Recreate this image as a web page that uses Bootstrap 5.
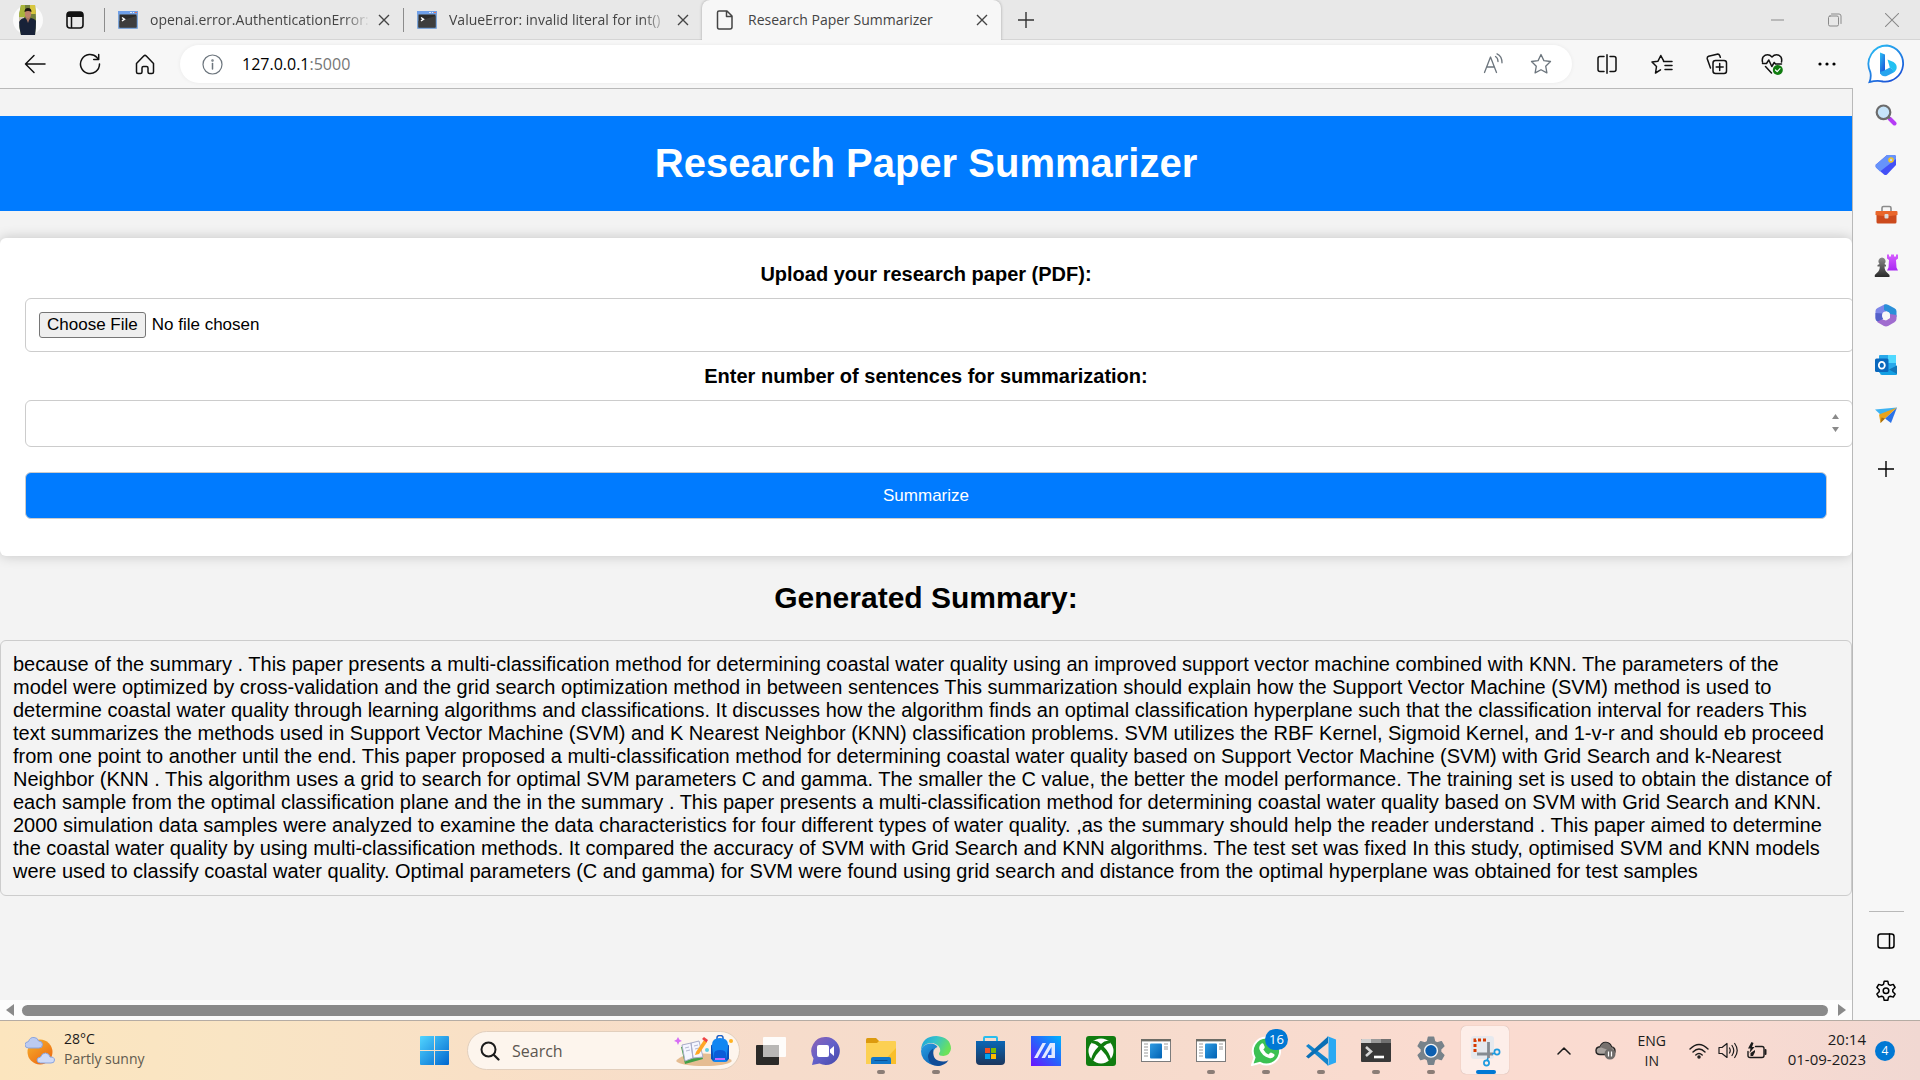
<!DOCTYPE html>
<html lang="en">
<head>
<meta charset="utf-8">
<meta name="viewport" content="width=device-width, initial-scale=1">
<title>Research Paper Summarizer</title>
<link href="https://cdn.jsdelivr.net/npm/bootstrap@5.3.0/dist/css/bootstrap.min.css" rel="stylesheet">
<style>
  body { font-family: "Liberation Sans", Arial, sans-serif; background: #f3f3f3; color: #000; }
  svg { display: block; flex: none; }
  button { color: inherit; }
  .chrome-ui { font-family: "Open Sans", "Noto Sans", sans-serif; }
  .plain-btn { border: 0; background: none; padding: 0; display: flex; align-items: center; justify-content: center; flex: none; }
  .stroke { fill: none; stroke: currentColor; stroke-width: 1.5; stroke-linecap: round; stroke-linejoin: round; }

  /* tab strip */
  .tab-strip { height: 40px; background: #e8e8e8; box-shadow: inset 0 -1px #d5d5d5; color: #333; }
  .strip-start { width: 104px; padding-left: 13px; gap: 23px; }
  .tab-item { width: 299px; height: 40px; padding: 0 9px 0 14px; font-size: 14px; line-height: 20px; color: #444; position: relative; }
  .tab-item .tab-title { flex: 1; margin-left: 12px; white-space: nowrap; }
  .tab-item.idle::before { content: ""; position: absolute; left: 0; top: 8px; width: 1px; height: 24px; background: #8c8c8c; }
  .tab-item.idle .tab-title { -webkit-mask-image: linear-gradient(90deg, #000 88%, transparent); mask-image: linear-gradient(90deg, #000 88%, transparent); }
  .tab-item.current { background: #f7f7f7; border-radius: 8px 8px 0 0; box-shadow: 0 0 3px rgba(0,0,0,.3); clip-path: inset(0 -4px 0 -4px); }
  .tab-close { width: 20px; height: 20px; margin-left: 4px; }
  .win-btn { width: 57px; height: 32px; color: #8a8a8a; }

  /* toolbar */
  .tool-bar { height: 48px; background: #f7f7f7; padding-left: 7px; }
  .tool-btn { width: 55px; height: 48px; color: #111; }
  .address { height: 38px; border-radius: 19px; background: #fff; margin: 0 7px 0 8px; padding: 0 20px 0 22px; box-shadow: 0 0 4px rgba(0,0,0,.06); }
  .address-url { font-size: 16px; line-height: 24px; margin-left: 19px; color: #767676; }
  .address-url b { font-weight: 400; color: #000; }
  .bing-btn { width: 66px; height: 48px; }

  /* page */
  .viewport-pane { border-top: 1px solid #b9b9b9; border-right: 1px solid #b9b9b9; min-width: 0; overflow: hidden; }
  .page-area { overflow: hidden; }
  .page-banner { font-size: 40px; line-height: 45px; font-weight: 700; background: #007bff; color: #fff; padding: 25px; margin: 27px 0; }
  .upload-card { background: #fff; border-radius: 6px; box-shadow: 0 0 13px rgba(0,0,0,.2); padding: 25px; }
  .upload-card label { font-size: 20px; line-height: 23px; font-weight: 700; margin-bottom: 12px; display: block; }
  .paper-field { display: block; box-sizing: content-box; width: 100%; border: 1px solid #ccc; border-radius: 6px; background: #fff; font-size: 17px; line-height: 21px; padding: 12px; margin-bottom: 13px; color: #000; }
  .paper-field[type=file] { height: 26px; padding: 13px 12px 13px 13px; line-height: 22px; }
  .paper-field::file-selector-button { border: 1px solid #767676; border-radius: 3px; background: #efefef; color: #000; padding: 1px 7px; height: 26px; margin: 0 6px 0 0; }
  .paper-field[type=number] { appearance: textfield; -moz-appearance: textfield; }
  .paper-field[type=number]::-webkit-inner-spin-button { display: none; }
  .spin-arrows { position: absolute; right: -12px; top: 13px; }
  .send-btn { border: 1px solid #ccc; border-radius: 6px; background: #007bff; color: #fff; font-size: 17px; line-height: 21px; padding: 12px; margin: 25px 0 12px; }
  .summary-title { font-size: 30px; line-height: 34px; font-weight: 700; margin: 25px 0; }
  .summary-box { border: 1px solid #ccc; border-radius: 6px; padding: 12px 16px 12px 12px; font-size: 20px; line-height: 23px; }
  .h-scroll { height: 20px; background: #fcfcfc; padding: 0 6px; gap: 8px; }
  .h-thumb { height: 11px; border-radius: 6px; background: #8a8a8a; }

  /* side bar */
  .side-bar { width: 67px; background: #f7f7f7; padding: 2px 1px 0 0; }
  .side-btn { width: 50px; height: 50px; }
  .side-line { width: 35px; height: 1px; background: #b9b9b9; }

  /* task bar */
  .task-bar { height: 60px; border-top: 1px solid #b5aca4; background: linear-gradient(90deg, #fce5be 0%, #f9e5c4 12%, #f9e0c6 25%, #f6dccb 40%, #f6dbcc 58%, #fadbd0 75%, #fadbd1 88%, #f1d8d2 100%); color: #1b1b1b; }
  .weather { width: 407px; padding-left: 25px; gap: 9px; font-size: 14px; line-height: 20px; }
  .weather small { font-size: 14px; color: #615a4e; display: block; }
  .task-btn { width: 55px; height: 59px; position: relative; }
  .task-btn.running::after { content: ""; position: absolute; left: 24px; bottom: 6px; width: 8px; height: 4px; border-radius: 2px; background: #8b7d76; }
  .task-btn.focused::before { content: ""; position: absolute; left: 3px; top: 5px; width: 48px; height: 48px; border-radius: 5px; background: #fdeee9; box-shadow: 0 0 1px rgba(0,0,0,.3); }
  .task-btn.focused::after { left: 18px; width: 20px; background: #0078d4; }
  .task-btn svg { position: relative; }
  .task-search { width: 273px; height: 39px; margin: 0 3px 0 5px; border-radius: 20px; background: #fdf5ed; border: 1px solid #e2cfbd; padding: 0 5px 0 12px; }
  .task-search input { font-size: 16px; line-height: 24px; border: 0; background: none; outline: 0; min-width: 0; padding: 0; margin-left: 12px; }
  .task-search input::placeholder { color: #5c5650; opacity: 1; }
  .count-dot { position: absolute; left: 27px; top: 8px; width: 23px; height: 21px; border-radius: 11px; background: #0078d4; color: #fff; font-size: 13px; line-height: 20px; text-align: center; }
  .tray { padding-right: 25px; font-size: 15px; line-height: 20px; }
  .tray-lang { width: 40px; margin: 0 17px 0 16px; font-size: 14px; }
  .note-dot { width: 20px; height: 20px; border-radius: 10px; background: #0078d4; color: #fff; font-size: 12px; line-height: 20px; margin-left: 9px; }
</style>
</head>
<body class="vh-100 d-flex flex-column overflow-hidden">

<svg width="0" height="0" class="position-absolute" aria-hidden="true">
  <symbol id="i-console" viewBox="0 0 20 18"><rect width="20" height="18" rx="1" fill="#7fa7da"/><rect width="20" height="3" fill="#6f9fe8"/><path d="M12 1.500h2M15 1.500h1" stroke="#dce8f8"/><path d="M17 1.500h2" stroke="#e0705c"/><rect x="1.500" y="3.500" width="17" height="13" fill="#2b2b2b"/><path d="M1.500 16.500V10L18.500 5v11.500z" fill="#3d3d3d"/><path d="M4 6.500l2.500 1.700L4 10" stroke="#fff" stroke-width="1.500" fill="none"/></symbol>
  <symbol id="i-x" viewBox="0 0 12 12"><path d="M1 1l10 10M11 1L1 11" stroke="currentColor" stroke-width="1.400" fill="none"/></symbol>
  <symbol id="i-plus" viewBox="0 0 18 18"><path d="M9 1v16M1 9h16" stroke="currentColor" stroke-width="1.400" fill="none"/></symbol>
  <symbol id="i-gear" viewBox="0 0 24 24"><path d="M10.200 2.200h3.600l.7 3.100 1.800 1 3-.9 1.800 3.100-2.300 2.200v2.100l2.300 2.200-1.800 3.100-3-.9-1.800 1-.7 3.100h-3.600l-.7-3.100-1.800-1-3 .9L2.900 15l2.300-2.200v-2.100L2.900 8.500l1.800-3.100 3 .9 1.800-1z"/></symbol>
  <symbol id="i-window" viewBox="0 0 30 23"><rect x=".5" y=".5" width="29" height="22" fill="#fff" stroke="#7c7c7c"/><path d="M0 1.200h30" stroke="#6c6c66" stroke-width="2.400"/><rect x="9" y="4.500" width="12" height="15" rx="1" fill="url(#g-blue)"/><path d="M3 5h4M3 8h4M3 11h4M3 14h4M3 17h4M23 5h4M23 8h4M23 10h4" stroke="#9a9a9a"/></symbol>
  <defs>
    <linearGradient id="g-blue" x1="0" y1="0" x2="1" y2="1"><stop stop-color="#2f9be2"/><stop offset="1" stop-color="#0062b4"/></linearGradient>
    <linearGradient id="g-win" x1="0" y1="0" x2="1" y2="1"><stop stop-color="#52d5ff"/><stop offset="1" stop-color="#0067cf"/></linearGradient>
    <linearGradient id="g-bing" x1="0" y1="0" x2=".6" y2="1"><stop stop-color="#2bc3f5"/><stop offset="1" stop-color="#1b55d8"/></linearGradient>
    <linearGradient id="g-purple" x1="0" y1="0" x2="0" y2="1"><stop stop-color="#d65cff"/><stop offset="1" stop-color="#a829f2"/></linearGradient>
    <linearGradient id="g-dark" x1="0" y1="0" x2="0" y2="1"><stop stop-color="#8a8a8a"/><stop offset="1" stop-color="#2b2b2b"/></linearGradient>
  </defs>
</svg>

<header class="chrome-ui flex-shrink-0">
  <div class="tab-strip d-flex">
    <div class="strip-start d-flex align-items-center">
      <button class="plain-btn" aria-label="Profile"><svg width="30" height="30" viewBox="0 0 30 30"><clipPath id="av"><path d="M8 0h14q2 15 0 30H8Q4 15 8 0z"/></clipPath><circle cx="15" cy="15" r="15" fill="#fafafa"/><g clip-path="url(#av)"><rect width="30" height="30" fill="#73823c"/><path d="M5 0h7v12H5z" fill="#a8b53a"/><path d="M17 0h7v9h-7z" fill="#d7c63f"/><path d="M6 12h5v8H6z" fill="#cfc6b8"/><path d="M6 30V17q2-4 6-4l3 2 3-2q5 1 6 5v12z" fill="#182238"/><ellipse cx="15" cy="8.500" rx="3.200" ry="4.800" fill="#bd826b"/><path d="M11.500 7q0-4 3.500-4t3.500 4q-3.500-2-7 0z" fill="#1a1512"/><path d="M13 13l2 5 2-5" fill="#a97560"/></g></svg></button>
      <button class="plain-btn" aria-label="Workspaces"><svg width="18" height="18" viewBox="0 0 18 18"><rect x="1" y="1" width="16" height="16" rx="3" fill="none" stroke="#111" stroke-width="1.600"/><path d="M1 6V3.500Q1 1 3.500 1h11Q17 1 17 3.500V6z" fill="#111"/><path d="M5.500 5v12" stroke="#111" stroke-width="1.500"/></svg></button>
    </div>
    <div class="tab-item idle d-flex align-items-center"><svg width="20" height="18"><use href="#i-console"/></svg><span class="tab-title">openai.error.AuthenticationError:</span><button class="plain-btn tab-close" aria-label="Close tab"><svg width="12" height="12"><use href="#i-x"/></svg></button></div>
    <div class="tab-item idle d-flex align-items-center"><svg width="20" height="18"><use href="#i-console"/></svg><span class="tab-title">ValueError: invalid literal for int()</span><button class="plain-btn tab-close" aria-label="Close tab"><svg width="12" height="12"><use href="#i-x"/></svg></button></div>
    <div class="tab-item current d-flex align-items-center"><svg width="20" height="20" viewBox="0 0 20 20" class="stroke"><path d="M3 1h8l5 5v11q0 2-2 2H3q-1.500 0-1.500-2V2.500Q1.500 1 3 1zM10.500 1v5.500H16"/></svg><span class="tab-title">Research Paper Summarizer</span><button class="plain-btn tab-close" aria-label="Close tab"><svg width="12" height="12"><use href="#i-x"/></svg></button></div>
    <button class="plain-btn px-3" aria-label="New tab"><svg width="18" height="18"><use href="#i-plus"/></svg></button>
    <div class="ms-auto d-flex pt-1">
      <button class="plain-btn win-btn" aria-label="Minimize"><svg width="13" height="2"><path d="M0 1h13" stroke="currentColor"/></svg></button>
      <button class="plain-btn win-btn" aria-label="Restore"><svg width="14" height="14" class="stroke" viewBox="0 0 14 14"><rect x=".5" y="3" width="10" height="10" rx="1.500" stroke-width="1"/><path d="M3.500 1h7.500q2 0 2 2v7.500" stroke-width="1"/></svg></button>
      <button class="plain-btn win-btn" aria-label="Close"><svg width="14" height="14" viewBox="0 0 12 12"><path d="M0 0l12 12M12 0L0 12" stroke="currentColor" stroke-width=".9"/></svg></button>
    </div>
  </div>
  <div class="tool-bar d-flex align-items-center">
    <button class="plain-btn tool-btn" aria-label="Back"><svg width="22" height="20" viewBox="0 0 22 20" class="stroke"><path d="M21 10H1.500M10 1.500L1.500 10l8.500 8.500"/></svg></button>
    <button class="plain-btn tool-btn" aria-label="Refresh"><svg width="22" height="22" viewBox="0 0 22 22" class="stroke"><path d="M20.500 11A9.500 9.500 0 1 1 18 4.600l1.500 1.900M19.700 1.500v5h-5"/></svg></button>
    <button class="plain-btn tool-btn" aria-label="Home"><svg width="20" height="21" viewBox="0 0 20 21" class="stroke"><path d="M1.500 9.500L8.700 2q1.300-1.200 2.600 0l7.200 7.500V18q0 1.500-1.500 1.500h-2.500q-1.500 0-1.500-1.500v-4q0-1.500-1.500-1.500h-3Q7 12.500 7 14v4q0 1.500-1.500 1.500H3q-1.500 0-1.500-1.500z"/></svg></button>
    <div class="address d-flex align-items-center flex-fill">
      <svg width="21" height="21" viewBox="0 0 21 21" class="stroke text-secondary"><circle cx="10.500" cy="10.500" r="9.500" stroke-width="1.200"/><path d="M10.500 9.500v5.500" /><circle cx="10.500" cy="6.400" r=".5"/></svg>
      <a class="address-url text-decoration-none" href="#"><b>127.0.0.1</b>:5000</a>
      <button class="plain-btn ms-auto me-4 text-secondary" aria-label="Read aloud"><svg width="24" height="22" viewBox="0 0 22 22" class="stroke"><path d="M1.500 19.500L7.500 4l6 15.500M3.800 14h7.500M12.500 3.500q2.500 1.500 2.500 5M14 .8q5 2.200 5 9" stroke-width="1.300"/></svg></button>
      <button class="plain-btn text-secondary" aria-label="Add to favorites"><svg width="22" height="22" viewBox="0 0 22 22" class="stroke"><path d="M11 1.500l2.900 6.100 6.600.9-4.800 4.700 1.200 6.700-5.900-3.200-5.900 3.200 1.200-6.700L1.500 8.500l6.600-.9z" stroke-width="1.300"/></svg></button>
    </div>
    <button class="plain-btn tool-btn" aria-label="Split screen"><svg width="20" height="20" viewBox="0 0 20 20" class="stroke"><path d="M7 2.500H3Q1 2.500 1 4.500v11q0 2 2 2h4M13 2.500h4q2 0 2 2v11q0 2-2 2h-4M10 .8v18.400"/></svg></button>
    <button class="plain-btn tool-btn" aria-label="Favorites"><svg width="22" height="20" viewBox="0 0 22 20" class="stroke"><path d="M12.500 7.500h8.500M14 11.500h7M14 15.500h7M9.500 15.800L4.500 19l1-6.500L1 8l6-.8L9.800 1.500l2.700 5.200"/></svg></button>
    <button class="plain-btn tool-btn" aria-label="Collections"><svg width="22" height="22" viewBox="0 0 22 22" class="stroke"><rect x="7" y="7.500" width="13.500" height="13" rx="2.500"/><path d="M13.700 10.500v7M10.200 14h7M4.500 15L1.300 6q-.5-2 1.300-2.700L11 1.200q2-.4 2.700 1.300l.6 1.800"/></svg></button>
    <button class="plain-btn tool-btn" aria-label="Browser essentials"><svg width="22" height="22" viewBox="0 0 22 22" class="stroke"><path d="M1.500 9Q.5 4 4 2.300q4-1.500 7 1.700 3-3.200 7-1.700Q21.500 4 20.500 9M1.500 10.500h4l2.300-3.500 3 6.500 2.400-4 1.300 1.500h6M4.500 13.500l6 6.500"/><circle cx="16.800" cy="17" r="5" fill="#107c10" stroke="none"/><path d="M14.500 17l1.700 1.600 2.800-3" stroke="#fff" stroke-width="1.200"/></svg></button>
    <button class="plain-btn tool-btn" aria-label="More"><svg width="18" height="4" viewBox="0 0 18 4"><circle cx="2" cy="2" r="1.600"/><circle cx="9" cy="2" r="1.600"/><circle cx="16" cy="2" r="1.600"/></svg></button>
    <button class="plain-btn bing-btn" aria-label="Bing chat"><svg width="40" height="40" viewBox="0 0 40 40"><path d="M20 1.500a18 18 0 1 1-4 36q-6-1.300-13.500.5 2-5 .8-10A18.500 18.500 0 0 1 20 1.500z" fill="#fff" stroke="url(#g-bing)" stroke-width="1.800"/><path d="M13 8.500l5 2v16.500l-5 3z" fill="url(#g-bing)"/><path d="M13 28q1 5 6 4.200 3-.8 9-4.700l-5-4-7 3.500z" fill="#27a5ee"/><path d="M20.500 15.500l6 2.500q4 2.500 3 7-1 3-3.500 3.500 0-3.500-3.200-5z" fill="#22c1f2"/></svg></button>
  </div>
</header>

<div class="d-flex flex-fill" style="min-height:0">
  <main class="viewport-pane flex-fill d-flex flex-column">
    <div class="page-area flex-fill">
      <h1 class="page-banner text-center">Research Paper Summarizer</h1>
      <form class="upload-card text-center" onsubmit="return false">
        <label for="paper">Upload your research paper (PDF):</label>
        <input class="paper-field" type="file" id="paper">
        <label for="sentences">Enter number of sentences for summarization:</label>
        <div class="position-relative">
          <input class="paper-field" type="number" id="sentences">
          <svg class="spin-arrows" width="7" height="21" viewBox="0 0 7 21" fill="#8a8a8a" aria-hidden="true"><path d="M0 6l3.500-5L7 6zM0 14h7l-3.500 5z"/></svg>
        </div>
        <button class="send-btn d-block w-100" type="submit">Summarize</button>
      </form>
      <h2 class="summary-title text-center">Generated Summary:</h2>
      <div class="summary-box">because of the summary . This paper presents a multi-classification method for determining coastal water quality using an improved support vector machine combined with KNN. The parameters of the model were optimized by cross-validation and the grid search optimization method in between sentences This summarization should explain how the Support Vector Machine (SVM) method is used to determine coastal water quality through learning algorithms and classifications. It discusses how the algorithm finds an optimal classification hyperplane such that the classification interval for readers This text summarizes the methods used in Support Vector Machine (SVM) and K Nearest Neighbor (KNN) classification problems. SVM utilizes the RBF Kernel, Sigmoid Kernel, and 1-v-r and should eb proceed from one point to another until the end. This paper proposed a multi-classification method for determining coastal water quality based on Support Vector Machine (SVM) with Grid Search and k-Nearest Neighbor (KNN . This algorithm uses a grid to search for optimal SVM parameters C and gamma. The smaller the C value, the better the model performance. The training set is used to obtain the distance of each sample from the optimal classification plane and the in the summary . This paper presents a multi-classification method for determining coastal water quality based on SVM with Grid Search and KNN. 2000 simulation data samples were analyzed to examine the data characteristics for four different types of water quality. ,as the summary should help the reader understand . This paper aimed to determine the coastal water quality by using multi-classification methods. It compared the accuracy of SVM with Grid Search and KNN algorithms. The test set was fixed In this study, optimised SVM and KNN models were used to classify coastal water quality. Optimal parameters (C and gamma) for SVM were found using grid search and distance from the optimal hyperplane was obtained for test samples</div>
    </div>
    <div class="h-scroll d-flex align-items-center flex-shrink-0">
      <svg width="8" height="12" fill="#8a8a8a"><path d="M8 0v12L0 6z"/></svg>
      <div class="h-thumb flex-fill"></div>
      <svg width="10" height="12" fill="#8a8a8a"><path d="M2 0v12l8-6z"/></svg>
    </div>
  </main>

  <nav class="side-bar d-flex flex-column align-items-center flex-shrink-0" aria-label="Side bar">
    <button class="plain-btn side-btn" aria-label="Search"><svg width="22" height="22" viewBox="0 0 22 22"><path d="M14.500 14.500l5 5" stroke="#b53cf5" stroke-width="4" stroke-linecap="round"/><path d="M13 12.500l2 2" stroke="#777" stroke-width="2"/><circle cx="8.500" cy="8.300" r="6.800" fill="#c6e4fa" stroke="#6c6c6c" stroke-width="2.200"/></svg></button>
    <button class="plain-btn side-btn" aria-label="Shopping"><svg width="22" height="22" viewBox="0 0 22 22"><path d="M12 1h7q2 0 2 2v8l-9 9.500q-1.500 1-3 0L1 13.500q-1-1.500 0-3z" fill="#4350f6"/><path d="M12 1h7q2 0 2 2v2L5 17.500l-4-4q-1-1.500 0-3z" fill="#6793fa"/><circle cx="16" cy="6" r="2" fill="#bcd0ff" stroke="#f3c623" stroke-width="1.600"/></svg></button>
    <button class="plain-btn side-btn" aria-label="Tools"><svg width="23" height="20" viewBox="0 0 23 20"><path d="M7 6V3q0-1.500 1.500-1.500h6Q16 1.500 16 3v3" fill="none" stroke="#8b8b8b" stroke-width="1.600"/><rect x="1.500" y="9" width="20" height="9.500" rx="1.500" fill="#cc4a1d"/><path d="M1.500 6h20q1 0 1 1v3l-11 1.500L.5 10V7q0-1 1-1z" fill="#e9662b"/><rect x="9.500" y="9" width="4" height="4.500" rx="1" fill="#dcdcdc"/></svg></button>
    <button class="plain-btn side-btn" aria-label="Games"><svg width="24" height="23" viewBox="0 0 24 23"><path d="M13 .5h2v2h2v-2h3v2h2v-2h2v4l-2 1.500.5 7.500 1.500 3H13l1.500-3 .5-7.500-2-1.500z" fill="url(#g-purple)"/><path d="M8 3.500a3.800 3.800 0 0 1 2.500 6.500l1.500 1v1.500h-1.500q0 4 3 6.500l2 2v2H.8v-2l2-2q3-2.500 3-6.500H3.500V11L5.500 10A3.800 3.800 0 0 1 8 3.500z" fill="url(#g-dark)"/></svg></button>
    <button class="plain-btn side-btn" aria-label="Microsoft 365"><svg width="22" height="23" viewBox="0 0 22 23"><path d="M11.500 7.500L7.500 10v6L1.500 17Q.5 16 .5 14V7Q.5 5 2.500 4L9 .7q1-.5 2.500-.2z" fill="#7e86e8"/><path d="M9 .7q2-.7 4 0l6.500 3.500q2 1 2 3v6l-7-2.700V9L9 6z" fill="#2a8fd8"/><path d="M21.500 11v4q0 2-2 3.200L13 22q-2 .8-4 0l-6.500-3.800L2 14.500l5.500 1 3.500 1 4-2.500v-4z" fill="#a06ccf"/><path d="M.5 9v5q0 2 2 3.500L8 15v-5.500z" fill="#5560c9"/><circle cx="11" cy="11.500" r="4" fill="#f7f7f7"/></svg></button>
    <button class="plain-btn side-btn" aria-label="Outlook"><svg width="22" height="22" viewBox="0 0 22 22"><rect x="4" y="1" width="17" height="18" rx="1" fill="#28a8ea"/><path d="M13 1h8v8h-8z" fill="#50d9ff"/><path d="M7 21q-2 0-2-2v-6l10 3 7-4.500V20q0 1-1 1z" fill="#14a0e4"/><path d="M14 15.500l8-4V20z" fill="#1276ba"/><rect x="0" y="4.500" width="13.500" height="13.500" rx="1.500" fill="#0a68bd"/><ellipse cx="6.800" cy="11.200" rx="3" ry="3.400" fill="none" stroke="#fff" stroke-width="1.800"/></svg></button>
    <button class="plain-btn side-btn" aria-label="Drop"><svg width="22" height="16" viewBox="0 0 22 16"><path d="M0 2.500L22 .5 8 10z" fill="#3eb3f2"/><path d="M22 .5L16 16l-6-4.500z" fill="#2b72e8"/><path d="M22 .5L10 11.500 5.500 16 4 7.500z" fill="#e9a31c"/><path d="M5.500 16l1-5.500 3.500 1z" fill="#a66f13"/></svg></button>
    <button class="plain-btn side-btn mt-1" aria-label="Customize"><svg width="18" height="18"><use href="#i-plus"/></svg></button>
    <div class="mt-auto mb-1 side-line"></div>
    <button class="plain-btn side-btn" aria-label="Hide side bar"><svg width="18" height="16" viewBox="0 0 18 16" class="stroke"><rect x="1" y="1" width="16" height="14" rx="2.500"/><path d="M12.500 1v14"/></svg></button>
    <button class="plain-btn side-btn mb-1" aria-label="Settings"><svg width="24" height="24" viewBox="0 0 24 24" class="stroke"><use href="#i-gear"/><circle cx="12" cy="11.800" r="2.800"/></svg></button>
  </nav>
</div>

<footer class="task-bar chrome-ui d-flex align-items-center flex-shrink-0">
  <div class="weather d-flex align-items-center">
    <svg width="30" height="30" viewBox="0 0 30 30"><defs><linearGradient id="sun" x1="0" y1="0" x2=".7" y2="1"><stop stop-color="#f5b52e"/><stop offset="1" stop-color="#ee6a12"/></linearGradient></defs><circle cx="15" cy="16" r="12.500" fill="url(#sun)"/><path d="M3.500 12Q0 12 0 8.700 0 6 3.500 5.500 5 1 9 1.500q3.500 0 4.500 3.500 4 0 4 3.500T14 12z" fill="#bccbf1" stroke="#8ba4dd"/><path d="M15.500 27q-3.500 0-3.500-3 0-2.500 3.500-3 1.500-4 5-4 4 .5 4.500 4 4.500-.2 4.500 3t-3.500 3z" fill="#cfdaf7" stroke="#8ba4dd"/></svg>
    <div class="pb-1">28°C<small>Partly sunny</small></div>
  </div>
  <button class="plain-btn task-btn" aria-label="Start"><svg width="29" height="29" viewBox="0 0 29 29" fill="url(#g-win)"><path d="M1 0h13v14H0V1q0-1 1-1zM15 0h13q1 0 1 1v13H15zM0 15h14v14H1q-1 0-1-1zM15 15h14v13q0 1-1 1H15z"/></svg></button>
  <div class="task-search d-flex align-items-center">
    <svg width="20" height="20" viewBox="0 0 20 20" class="stroke"><circle cx="8.500" cy="8.500" r="7" stroke-width="2"/><path d="M14 14l4.500 4.500" stroke-width="2.200"/></svg>
    <input type="search" placeholder="Search" aria-label="Search" class="flex-fill">
    <svg width="60" height="32" viewBox="0 0 60 32"><path d="M2 26q6-8 28-7.500T58 26q-5 5-28 5T2 26z" fill="#e5bd92"/><path d="M7 12l10-3 8 1 4 14-18 5z" fill="#43a047"/><path d="M8 10l9-2 2 15-8 3zM17 8l8-2 4 16-10 1z" fill="#f5f6ff" stroke="#a9acc8"/><path d="M11 13l4-1M12 16l4-1M20 11l4-1M21 14l4-1" stroke="#b5b8d2"/><path d="M22 17l8-12 3 2-8 12-4 1z" fill="#ffa726"/><path d="M28 4l2-2 4 3-1.500 2.500z" fill="#ef4444"/><path d="M4 2l1.300 2.500L8 6 5.300 7 4 10 2.700 7 0 6l2.700-1.500z" fill="#d76df5"/><circle cx="33" cy="15" r="2" fill="#5fd0e6"/><circle cx="57" cy="6" r="2" fill="#ffb320"/><path d="M43 4V2.500Q43 .5 46 .5t3 2V4" stroke="#1f5fc4" fill="none" stroke-width="1.500"/><path d="M38 10q0-7 8-7t8 7v14q0 3-3 3H41q-3 0-3-3z" fill="#1286f2"/><path d="M38 12q0-3-1-2v14l3 2zM54 12q0-3 1-2v14l-3 2z" fill="#0850bd"/><path d="M40 19q0-4 6-4t6 4v6H40z" fill="#0a5cd8"/><path d="M41 24h10" stroke="#c36bff" stroke-width="2"/></svg>
  </div>
  <button class="plain-btn task-btn" aria-label="Task view"><svg width="30" height="28" viewBox="0 0 30 28"><rect x="0" y="8" width="23" height="20" rx="1" fill="#2b2a28"/><rect x="7" y="0" width="23" height="20" rx="1" fill="#fff" fill-opacity=".9"/><rect x="7" y="8" width="16" height="12" fill="#b9b7b5"/></svg></button>
  <button class="plain-btn task-btn" aria-label="Chat"><svg width="29" height="28" viewBox="0 0 29 28"><defs><linearGradient id="chat" x1="0" y1="0" x2="1" y2="1"><stop stop-color="#8f63b5"/><stop offset=".5" stop-color="#6260c9"/><stop offset="1" stop-color="#4448a8"/></linearGradient></defs><path d="M14.500 0a14 14 0 1 1-6 26.500L1 28l1.500-6.500A14 14 0 0 1 14.500 0z" fill="url(#chat)"/><rect x="6" y="8" width="12" height="12" rx="2" fill="#fff"/><path d="M19 12.500l4-3.500v10l-4-3.500z" fill="#fff"/></svg></button>
  <button class="plain-btn task-btn running" aria-label="File Explorer"><svg width="30" height="26" viewBox="0 0 30 26"><path d="M0 8V1.500Q0 0 1.500 0H10l3 3v5z" fill="#dc9a0e"/><path d="M0 5h11l2-2h16q1 0 1 1v22H0z" fill="#fcd052"/><path d="M30 10v16H15z" fill="#f9bf2b"/><path d="M5 26v-5q0-2 2-2h16q2 0 2 2v5z" fill="#1177c9"/><path d="M8.500 22.500h13" stroke="#0b4f91"/></svg></button>
  <button class="plain-btn task-btn running" aria-label="Microsoft Edge"><svg width="30" height="30" viewBox="0 0 30 30"><defs><linearGradient id="ed1" x1="0" y1="0" x2="1" y2=".4"><stop stop-color="#1a9fdc"/><stop offset=".5" stop-color="#36c3c9"/><stop offset="1" stop-color="#6ce25a"/></linearGradient><linearGradient id="ed2" x1="0" y1="0" x2=".7" y2="1"><stop stop-color="#2a9fe3"/><stop offset="1" stop-color="#0b62b4"/></linearGradient></defs><path d="M0 14Q1 0 15.500 0 29.500 1 30 12.500q-.5 6.500-7.500 7.500-5 0-4.500-2.500 2-2 1-5Q16.500 7 9.500 7 2 8 0 14z" fill="url(#ed1)"/><path d="M0 15Q1 8 9.500 7.500q5 .3 7 3.500-5 2-4.500 8 .5 7 8 10.500Q14 30.500 9 28 0 23.500 0 15z" fill="url(#ed2)"/><path d="M12.200 15q-.5 10.500 10 10.500 3 0 5.300-1.300Q24 29.500 17 30q-9-.5-10-9Q7 16 12.200 12.500q-.5 1-.2 2.500z" fill="#104c97"/></svg></button>
  <button class="plain-btn task-btn" aria-label="Microsoft Store"><svg width="29" height="29" viewBox="0 0 29 29"><defs><linearGradient id="sto" x1="0" y1="0" x2="0" y2="1"><stop stop-color="#0a66b5"/><stop offset="1" stop-color="#1b365d"/></linearGradient></defs><path d="M8 6V2q0-1 1-1h11q1 0 1 1v4" fill="none" stroke="#29bdee" stroke-width="2"/><path d="M0 5h29v20q0 4-4 4H4q-4 0-4-4z" fill="url(#sto)"/><path d="M9 12h5v5H9z" fill="#f25022"/><path d="M15 12h5v5h-5z" fill="#7fba00"/><path d="M9 18h5v5H9z" fill="#00a4ef"/><path d="M15 18h5v5h-5z" fill="#ffb900"/></svg></button>
  <button class="plain-btn task-btn" aria-label="MyASUS"><svg width="30" height="30" viewBox="0 0 30 30"><defs><linearGradient id="asu" x1="0" y1="1" x2="1" y2="0"><stop stop-color="#6a11ff"/><stop offset=".5" stop-color="#2a62fb"/><stop offset="1" stop-color="#00b4ff"/></linearGradient></defs><rect width="30" height="30" fill="url(#asu)"/><path d="M3 22l8.500-15H15L6.500 22zM10.500 22L19 7h5v15h-3.500V11L14 22zM17 19h4v3h-4z" fill="#e3e9ff"/></svg></button>
  <button class="plain-btn task-btn" aria-label="Xbox"><svg width="30" height="30" viewBox="0 0 30 30"><rect width="30" height="30" rx="3" fill="#107c10"/><circle cx="15" cy="15" r="12.500" fill="#fff"/><path d="M6.500 5Q11 4 15 8q4-4 8.500-3l1 2Q21 7 17.500 10.500q6 6 7.500 13l-2 1.500Q20 18 15 13.500 10 18 7 25l-2-1.500q1.500-7 7.500-13Q9 7 5.500 7z" fill="#107c10"/></svg></button>
  <button class="plain-btn task-btn" aria-label="Application"><svg width="30" height="23"><use href="#i-window"/></svg></button>
  <button class="plain-btn task-btn running" aria-label="Application"><svg width="30" height="23"><use href="#i-window"/></svg></button>
  <button class="plain-btn task-btn running" aria-label="WhatsApp"><svg width="30" height="30" viewBox="0 0 30 30"><path d="M15.500 1.500a13.500 13.500 0 1 1-6.500 25.300L1 29l2.500-7.500A13.500 13.500 0 0 1 15.500 1.500z" fill="#3cc152" stroke="#fff" stroke-width="2"/><path d="M10 8q1.500-1.500 2.500 0l1.300 3q0 1-1.500 2.500 2 3.500 5.200 5 1.500-2 2.500-2l3 1.500q1 1 0 2.500-2 2.500-5 1.500-7-2-9.500-8.500Q7.500 10.500 10 8z" fill="#fff"/></svg><span class="count-dot">16</span></button>
  <button class="plain-btn task-btn running" aria-label="Visual Studio Code"><svg width="30" height="30" viewBox="0 0 30 30"><path d="M0 10l2.500-2L22 23v6.500z" fill="#1284cc"/><path d="M0 20.500l2.500 2L22 7V.5z" fill="#0a6fb5"/><path d="M21 0l9 3.500v23L21 30q1.500-1 1.500-3V3q0-2-1.500-3z" fill="#2ba9f3"/></svg></button>
  <button class="plain-btn task-btn running" aria-label="Terminal"><svg width="30" height="23" viewBox="0 0 30 23"><rect width="30" height="23" rx="1" fill="#383838"/><path d="M0 4V1q0-1 1-1h9v4z" fill="#cfcfcf"/><path d="M10 0h10v4H10z" fill="#999"/><path d="M20 0h9q1 0 1 1v3H20z" fill="#707070"/><path d="M5 8l5 4.500L5 17" fill="none" stroke="#d5d5d5" stroke-width="2.600"/><path d="M13 18h10" stroke="#fff" stroke-width="2.600"/></svg></button>
  <button class="plain-btn task-btn running" aria-label="Settings"><svg width="34" height="34" viewBox="0 0 24 24" fill="#77828a" stroke="#77828a" stroke-linejoin="round"><use href="#i-gear"/><circle cx="12" cy="11.800" r="5" fill="#f4f4f4" stroke="none"/><circle cx="12" cy="11.800" r="4" fill="#0c5fb0" stroke="none"/></svg></button>
  <button class="plain-btn task-btn running focused" aria-label="Snipping Tool"><svg width="32" height="32" viewBox="0 0 32 32"><rect x="1" y="1" width="23" height="23" rx="3" fill="#e6e9ee"/><path d="M5 17V5h13" fill="none" stroke="#d83b01" stroke-width="3" stroke-dasharray="3 2"/><path d="M18.500 7v16M7 19h16" stroke="#858b91" stroke-width="2.800"/><circle cx="27" cy="17" r="2.600" fill="none" stroke="#1d9be0" stroke-width="1.700"/><circle cx="16.500" cy="28" r="2.600" fill="none" stroke="#1d9be0" stroke-width="1.700"/><path d="M22 19l3-1M18 23l-1 3" stroke="#1d9be0" stroke-width="1.700"/></svg></button>

  <div class="tray d-flex align-items-center ms-auto">
    <button class="plain-btn me-4" aria-label="Hidden icons"><svg width="14" height="8" viewBox="0 0 14 8" class="stroke"><path d="M1 7l6-6 6 6"/></svg></button>
    <button class="plain-btn" aria-label="OneDrive"><svg width="21" height="19" viewBox="0 0 21 19"><path d="M5 13.500q-4 0-4-4 0-3.500 4-3.800Q7 1 11 1.500q4.500.5 5.500 4.500 3.500.5 3.500 4t-3.500 3.500z" fill="#a8a29e" stroke="#222" stroke-width="1.400"/><path d="M5 6l8 3 6-2-3-1q-1-4-5-4.500Q7 1.500 5 6z" fill="#77716e"/><circle cx="15" cy="13" r="5.500" fill="#6f6c6a"/><path d="M13.500 10.500v5M16.500 10.500v5" stroke="#fff" stroke-width="1.200"/></svg></button>
    <div class="tray-lang text-center">ENG<br>IN</div>
    <div class="d-flex align-items-center gap-2 me-3 pe-1">
      <svg width="20" height="16" viewBox="0 0 20 16" class="stroke"><path d="M1 6q9-9 18 0M4 9q6-6 12 0M6.800 12q3.200-3 6.400 0" stroke-width="1.400"/><circle cx="10" cy="14" r="1"/></svg>
      <svg width="22" height="17" viewBox="0 0 20 17" class="stroke"><path d="M1 5.500h3l5-4v14l-5-4H1zM11.500 6q1.500 2.500 0 5M14 3.500q3.500 5 0 10M16.700 1.500q5 7 0 14" stroke-width="1.200"/></svg>
      <svg width="21" height="17" viewBox="0 0 21 17" class="stroke"><path d="M8.500 4.500H15q2 0 2 2v7q0 2-2 2H3q-2 0-2-2v-4" stroke-width="1.400"/><path d="M18.500 8v4" stroke-width="2"/><path d="M4.500 0L1 6.500h2.500L2.500 11l5-6H5l1.500-4z" fill="#1b1b1b" stroke="none"/><path d="M3.500 14v-3L8 8v2l-2 4z" fill="#1b1b1b" stroke="none"/></svg>
    </div>
    <div class="text-end pb-1">20:14<br>01-09-2023</div>
    <div class="note-dot text-center">4</div>
  </div>
</footer>

<script src="https://cdn.jsdelivr.net/npm/bootstrap@5.3.0/dist/js/bootstrap.bundle.min.js"></script>
</body>
</html>
